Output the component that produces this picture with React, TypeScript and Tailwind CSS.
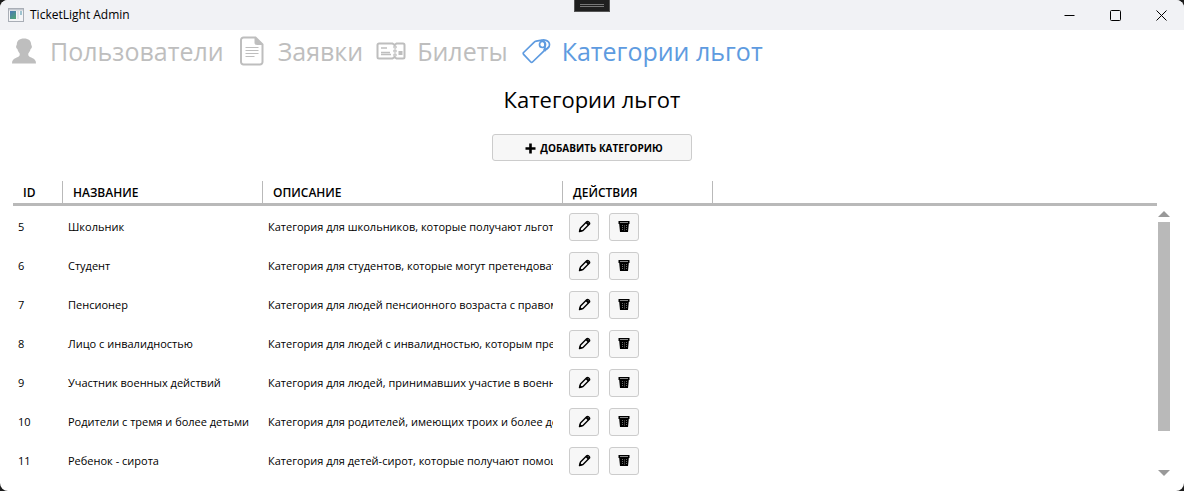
import type { ReactNode } from "react";

const categories = [
  { id: 5, name: "Школьник", description: "Категория для школьников, которые получают льготы" },
  { id: 6, name: "Студент", description: "Категория для студентов, которые могут претендовать" },
  { id: 7, name: "Пенсионер", description: "Категория для людей пенсионного возраста с правом" },
  { id: 8, name: "Лицо с инвалидностью", description: "Категория для людей с инвалидностью, которым предоставлены" },
  { id: 9, name: "Участник военных действий", description: "Категория для людей, принимавших участие в военных" },
  { id: 10, name: "Родители с тремя и более детьми", description: "Категория для родителей, имеющих троих и более детей" },
  { id: 11, name: "Ребенок - сирота", description: "Категория для детей-сирот, которые получают помощь" },
];

function AppIcon() {
  return (
    <svg width="16" height="14" viewBox="0 0 16 14" aria-hidden="true">
      <defs>
        <linearGradient id="pane" x1="0" y1="0" x2="0.6" y2="1">
          <stop offset="0" stopColor="#4a78b8" />
          <stop offset="1" stopColor="#4fa07a" />
        </linearGradient>
      </defs>
      <rect x="0.5" y="0.5" width="15" height="13" fill="#f4f5f7" stroke="#a9aeb6" />
      <rect x="1" y="1" width="14" height="1.5" fill="#c3c8cf" />
      <rect x="2" y="3" width="6" height="8" fill="url(#pane)" />
      <rect x="9" y="3" width="2" height="8" fill="#dfe3e8" />
      <rect x="12" y="3" width="2" height="4" fill="#9fc3cf" />
    </svg>
  );
}

function UserIcon() {
  return (
    <svg width="24" height="26" viewBox="0 0 24 26" fill="currentColor" aria-hidden="true">
      <path d="M12 0.5c4.600 0 7.200 2.300 7.200 6 0 .9.8 1.100.7 2.300-.1 1.400-.8 1.900-1.300 2.300-.5 2.100-1.300 3.400-2.300 4.400v1.800c.6 1.500 2.500 2 4.400 2.900 2.100 1 3.300 2.300 3.300 5.300H0c0-3 1.200-4.300 3.300-5.300 1.900-.9 3.800-1.400 4.400-2.900v-1.800c-1-1-1.800-2.300-2.300-4.400-.5-.4-1.200-.9-1.300-2.300-.1-1.200.7-1.400.7-2.300 0-3.700 2.600-6 7.200-6Z" />
    </svg>
  );
}

function DocumentIcon() {
  return (
    <svg width="24" height="30" viewBox="0 0 24 30" fill="none" stroke="currentColor" aria-hidden="true">
      <path d="M3.500 1.500h12l7 7v17.500a2.500 2.500 0 0 1-2.500 2.500H3.500A2.500 2.500 0 0 1 1 26V4a2.500 2.500 0 0 1 2.500-2.500Z" strokeWidth="2" />
      <path d="M15 1.500v5.500a1.500 1.500 0 0 0 1.500 1.500h6Z" fill="currentColor" />
      <path d="M5.500 11.500h13M5.500 14.500h13M5.500 17.500h13M5.500 20.500h9" strokeWidth="1.200" />
    </svg>
  );
}

function TicketIcon() {
  return (
    <svg width="30" height="18" viewBox="0 0 30 18" fill="none" stroke="currentColor" className="shrink-0" aria-hidden="true">
      <path d="M3 1.500h13.500l2 1.500 2-1.500H27A1.500 1.500 0 0 1 28.500 3v12a1.500 1.500 0 0 1-1.500 1.500h-6.500l-2-1.500-2 1.500H3A1.500 1.500 0 0 1 1.500 15V3A1.500 1.500 0 0 1 3 1.500Z" strokeWidth="2" />
      <path d="M5 6h6M5 10.500h9M5 12.500h10" strokeWidth="1.400" />
      <circle cx="19" cy="5" r="1.200" strokeWidth="1.200" />
      <circle cx="19" cy="9" r="1.200" strokeWidth="1.200" />
      <circle cx="19" cy="13" r="1.200" strokeWidth="1.200" />
      <rect x="22.500" y="9" width="4" height="4" fill="currentColor" stroke="none" />
    </svg>
  );
}

function TagsIcon() {
  return (
    <svg width="30" height="26" viewBox="0 0 30 26" fill="none" stroke="currentColor" strokeWidth="1.700" strokeLinejoin="round" className="shrink-0" aria-hidden="true">
      <path d="M2.600 14.500 13 4.300c.7-.6 1.400-.9 2.300-1.100l4.200-.9c2.500-.3 4.400 1.600 4.400 4v4.300c0 1-.4 1.800-1.100 2.500L11.500 24a1.200 1.200 0 0 1-1.700 0l-7.200-7.700a1.200 1.200 0 0 1 0-1.800Z" />
      <circle cx="21.500" cy="6.500" r="3" />
      <path d="M19 3.500c2.800-3 9.500-1.200 9.500 3.200 0 3.600-3.200 5.200-6 4.400" />
      <path d="M28 8.500 23.500 13.200" />
    </svg>
  );
}

function PencilIcon() {
  return (
    <svg width="13" height="13" viewBox="0 0 13 13" aria-hidden="true">
      <path d="M1.500 11.500 2.500 8 8.700 1.800a1.300 1.300 0 0 1 1.800 0l.7.7a1.300 1.300 0 0 1 0 1.800L5 10.500Z" fill="none" stroke="#000" strokeWidth="1.400" strokeLinejoin="round" />
      <path d="m7.500 3 2.500 2.500 1.500-1.500-2.500-2.500ZM1 12l.8-3.300 2.500 2.500Z" fill="#000" />
    </svg>
  );
}

function BinIcon() {
  return (
    <svg width="12" height="11" viewBox="0 0 12 11" aria-hidden="true">
      <path d="M.5 0h11v3H.5ZM1.200 3h9.600L10 11H2Z" fill="#000" />
      <path d="M2 1.500h8" stroke="#aaa" strokeWidth="0.800" />
      <path d="M4.500 4v5M6.500 4.500v5M8.500 4v5" stroke="#999" strokeWidth="0.700" strokeDasharray="1 1" />
    </svg>
  );
}

function NavItem({ label, icon, active = false }: { label: string; icon: ReactNode; active?: boolean }) {
  return (
    <a
      href="#"
      aria-current={active ? "page" : undefined}
      className={active ? "flex items-center gap-3 text-[#5e9be0]" : "flex items-center gap-3 text-[#bebebe]"}
    >
      <span className="flex w-7 shrink-0 justify-center">{icon}</span>
      <span className="whitespace-nowrap">{label}</span>
    </a>
  );
}

function RowButton({ label, children }: { label: string; children: ReactNode }) {
  return (
    <button
      type="button"
      aria-label={label}
      className="flex h-7 w-[30px] items-center justify-center rounded-[3px] border border-[#cccccc] bg-[#f7f7f7]"
    >
      {children}
    </button>
  );
}

function WindowButton({ label, path }: { label: string; path: string }) {
  return (
    <button type="button" aria-label={label} className="flex w-[46px] items-center justify-center">
      <svg width="11" height="11" viewBox="0 0 11 11" fill="none" stroke="#000" aria-hidden="true">
        <path d={path} />
      </svg>
    </button>
  );
}

function ColumnHeader({ children }: { children: ReactNode }) {
  return (
    <th className="h-[25px] border-b-[3px] border-[#b9b9b9] p-0 font-semibold">
      <div className="flex h-[22px] items-center border-r border-[#b9b9b9] px-2.5 pt-0.5">{children}</div>
    </th>
  );
}

export default function App() {
  return (
    <div className="h-screen bg-[#1c1c1c]">
      <div className="flex h-full flex-col overflow-hidden rounded-lg bg-white font-['Open_Sans','Noto_Sans',sans-serif] text-black">
        <header className="relative flex h-[30px] shrink-0 items-stretch bg-[#f1f2f5]">
          <div className="flex flex-1 items-center gap-1.5 pl-2 text-xs">
            <AppIcon />
            <span>TicketLight Admin</span>
          </div>
          <div className="flex">
            <WindowButton label="Свернуть" path="M0.500 5.500h10" />
            <WindowButton label="Развернуть" path="M1.500 0.500h8a1 1 0 0 1 1 1v8a1 1 0 0 1-1 1h-8a1 1 0 0 1-1-1v-8a1 1 0 0 1 1-1Z" />
            <WindowButton label="Закрыть" path="m0.500 0.500 10 10M10.500 0.500l-10 10" />
          </div>
          <div className="absolute top-0 left-1/2 flex h-3 w-9 -translate-x-1/2 flex-col items-center justify-center gap-px border border-t-0 border-[#555555] bg-[#1f1f1f]">
            <span className="h-px w-6 bg-[#777777]" />
            <span className="h-px w-6 bg-[#777777]" />
          </div>
        </header>

        <nav className="flex shrink-0 items-center gap-3.5 px-2.5 py-[3px] text-[25px] leading-9">
          <NavItem label="Пользователи" icon={<UserIcon />} />
          <NavItem label="Заявки" icon={<DocumentIcon />} />
          <NavItem label="Билеты" icon={<TicketIcon />} />
          <NavItem label="Категории льгот" icon={<TagsIcon />} active />
        </nav>

        <main className="flex min-h-0 flex-1 flex-col px-[13px] pb-3">
          <h1 className="pt-[9px] text-center text-[22px] leading-9">Категории льгот</h1>
          <button
            type="button"
            className="mt-[17px] flex h-[27px] w-[200px] shrink-0 items-center justify-center gap-1 self-center rounded-[3px] border border-[#cccccc] bg-[#f7f7f7] pt-0.5 pl-1 text-[10px] font-bold"
          >
            <svg width="11" height="11" viewBox="0 0 11 11" aria-hidden="true">
              <path d="M5.500 0.500v10M0.500 5.500h10" stroke="#000" strokeWidth="2.600" />
            </svg>
            ДОБАВИТЬ КАТЕГОРИЮ
          </button>

          <div className="mt-5 flex min-h-0 flex-1">
            <div className="min-w-0 flex-1 overflow-hidden">
              <table className="w-full table-fixed border-separate border-spacing-0 text-left whitespace-nowrap">
                <colgroup>
                  <col className="w-[50px]" />
                  <col className="w-[200px]" />
                  <col className="w-[300px]" />
                  <col className="w-[150px]" />
                  <col />
                </colgroup>
                <thead className="text-xs">
                  <tr>
                    <ColumnHeader>ID</ColumnHeader>
                    <ColumnHeader>НАЗВАНИЕ</ColumnHeader>
                    <ColumnHeader>ОПИСАНИЕ</ColumnHeader>
                    <ColumnHeader>ДЕЙСТВИЯ</ColumnHeader>
                    <td className="border-b-[3px] border-[#b9b9b9] p-0" />
                  </tr>
                </thead>
                <tbody className="text-[11px]">
                  {categories.map((category) => (
                    <tr key={category.id} className="h-[39px]">
                      <td className="px-[5px] pt-1 pb-0">{category.id}</td>
                      <td className="px-[5px] pt-1 pb-0">{category.name}</td>
                      <td className="pt-1 pr-2.5 pb-0 pl-[5px]">
                        <div className="overflow-hidden">{category.description}</div>
                      </td>
                      <td className="px-1.5 pt-0.5 pb-0">
                        <div className="flex gap-2.5">
                          <RowButton label="Изменить">
                            <PencilIcon />
                          </RowButton>
                          <RowButton label="Удалить">
                            <BinIcon />
                          </RowButton>
                        </div>
                      </td>
                      <td />
                    </tr>
                  ))}
                </tbody>
              </table>
            </div>
            <div className="flex w-[14px] shrink-0 flex-col items-center pt-[30px] pb-[3px]" aria-hidden="true">
              <svg width="12" height="6" viewBox="0 0 12 6">
                <path d="M0 6 6 0l6 6Z" fill="#999" />
              </svg>
              <div className="flex w-3 flex-1 flex-col py-[5px]">
                <div className="h-[86%] bg-[#b9b9b9]" />
              </div>
              <svg width="12" height="6" viewBox="0 0 12 6">
                <path d="M0 0h12L6 6Z" fill="#999" />
              </svg>
            </div>
          </div>
        </main>
      </div>
    </div>
  );
}
